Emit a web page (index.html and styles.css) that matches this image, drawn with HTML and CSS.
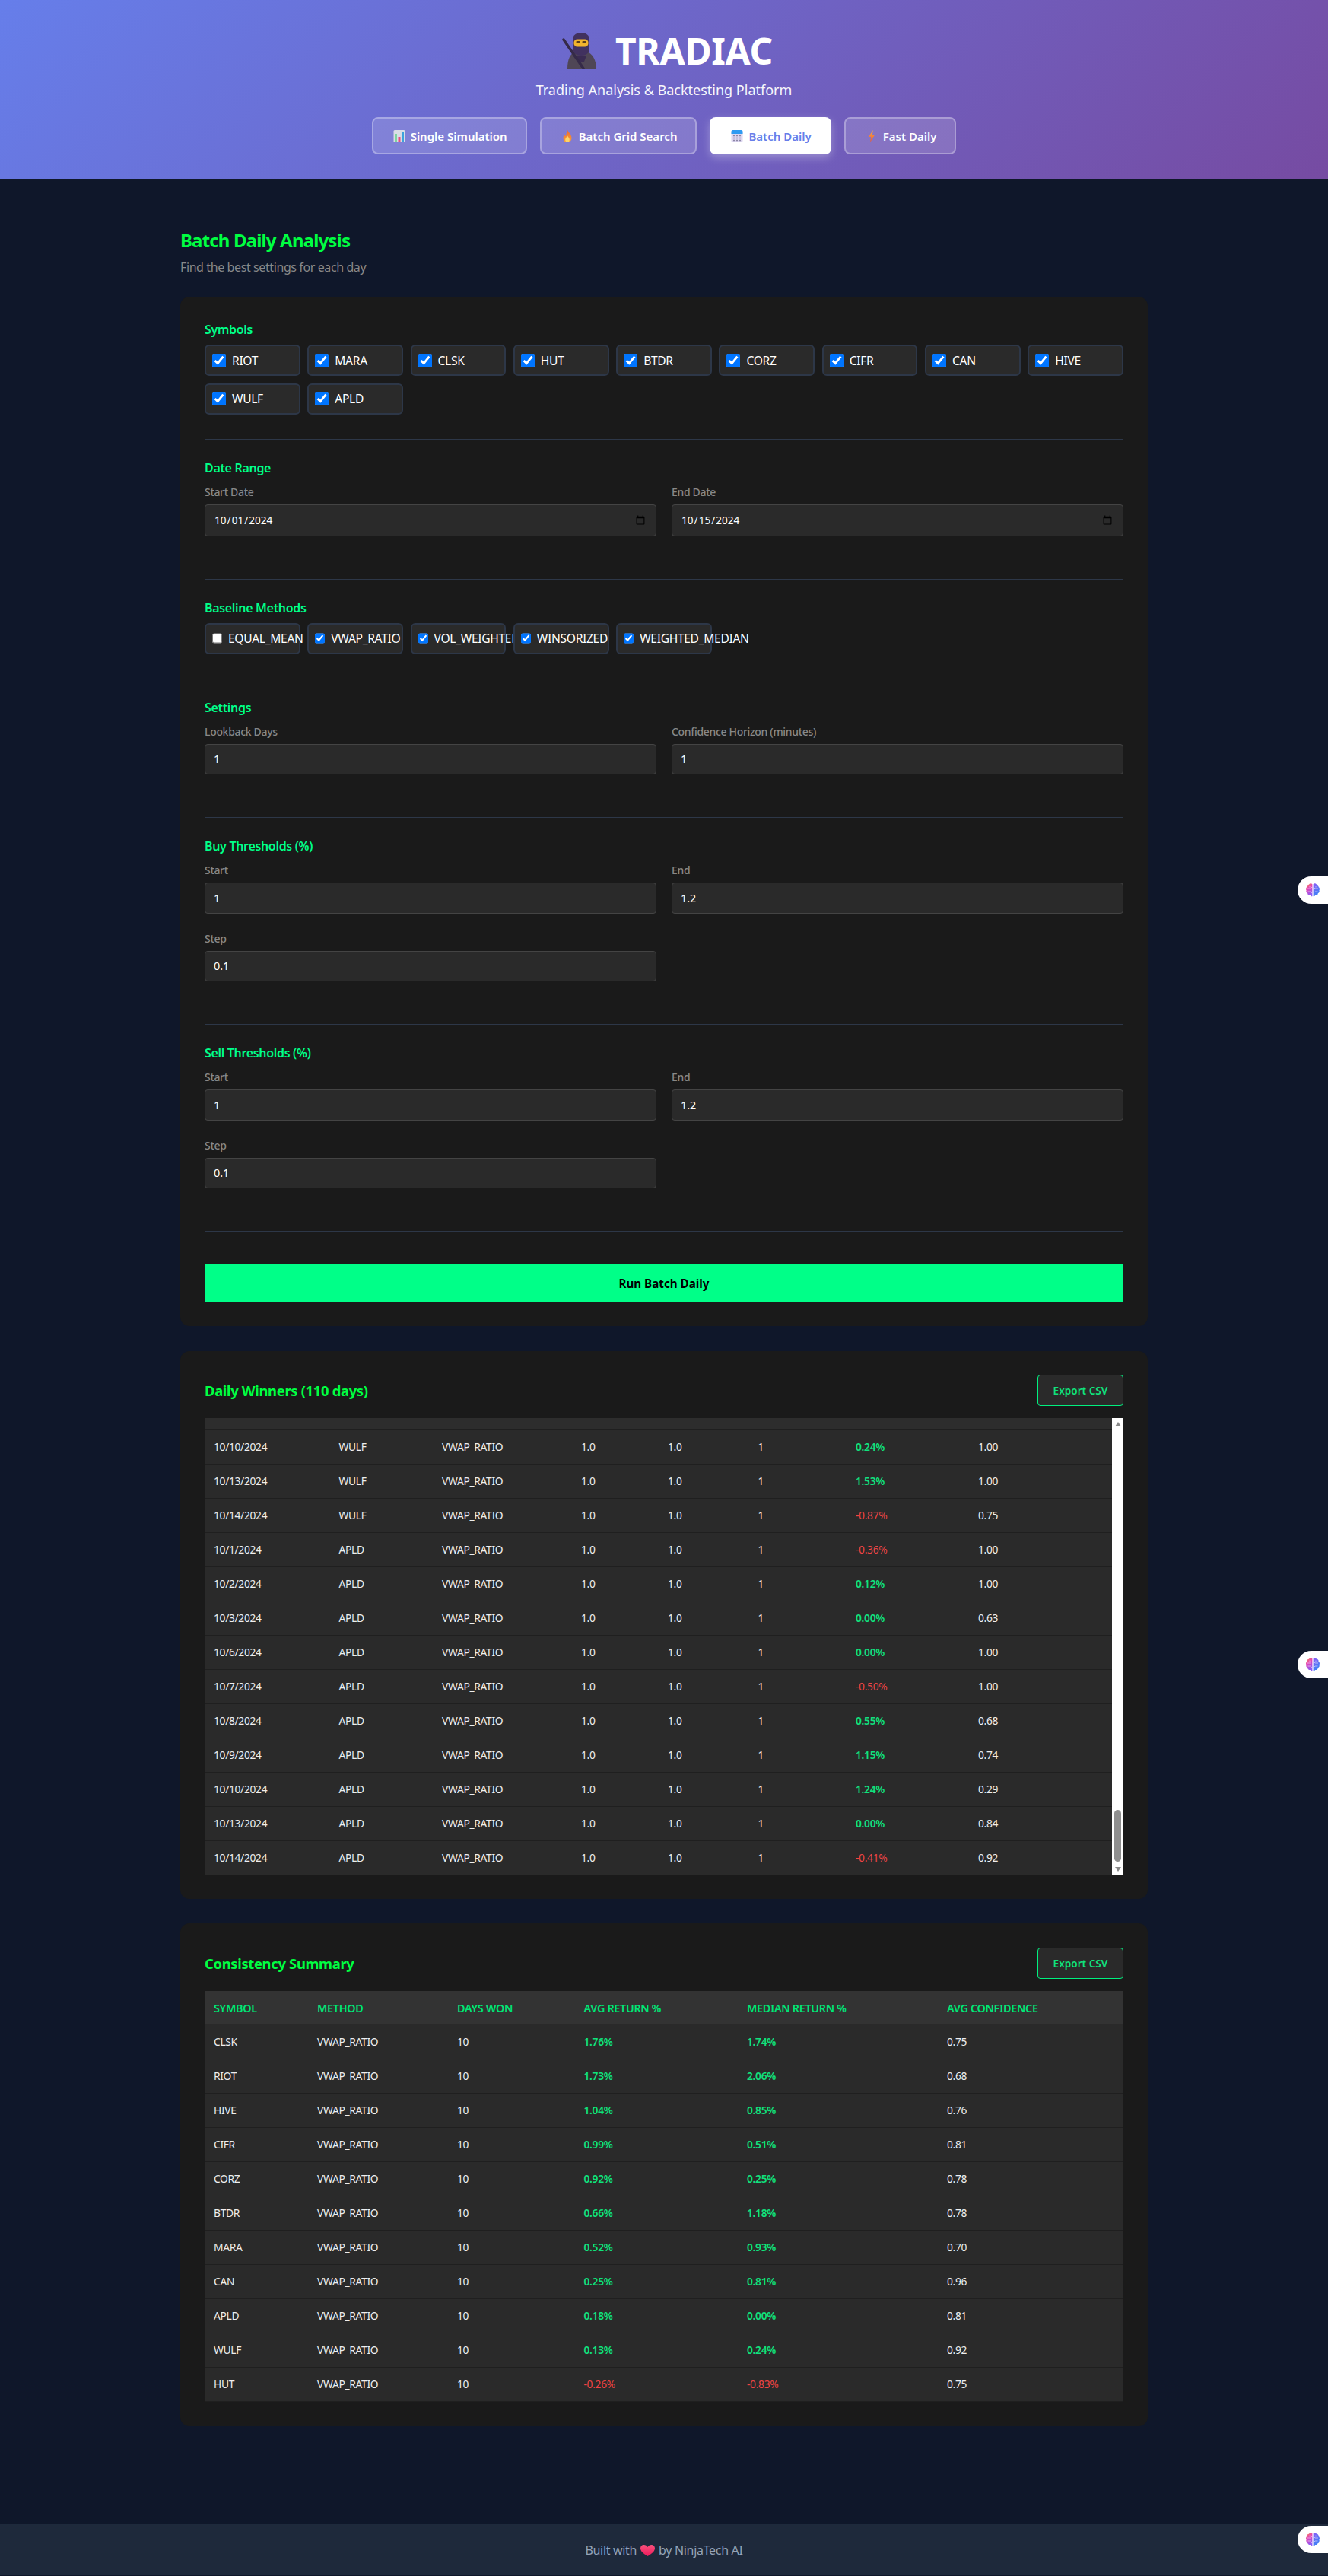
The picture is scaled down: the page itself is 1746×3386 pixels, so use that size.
FILE: index.html
```html
<!DOCTYPE html>
<html lang="en">

<head>
    <meta charset="UTF-8">
    <meta name="viewport" content="width=device-width, initial-scale=1.0">
    <title>TRADIAC</title>
    <link rel="stylesheet" href="styles.css">
</head>

<body>
    <svg class="defs" width="0" height="0">
        <defs>
            <linearGradient id="brainLeft" x1="0" y1="0" x2="0.4" y2="1">
                <stop offset="0" stop-color="#fb923c"/>
                <stop offset="0.45" stop-color="#e344b8"/>
                <stop offset="1" stop-color="#8b5cf6"/>
            </linearGradient>
            <linearGradient id="brainRight" x1="0" y1="0" x2="0.4" y2="1">
                <stop offset="0" stop-color="#8b5cf6"/>
                <stop offset="1" stop-color="#3b82f6"/>
            </linearGradient>
            <linearGradient id="flame" x1="0" y1="0" x2="0" y2="1">
                <stop offset="0" stop-color="#f0692c"/>
                <stop offset="1" stop-color="#f9a13a"/>
            </linearGradient>
            <linearGradient id="bolt" x1="0" y1="0" x2="0" y2="1">
                <stop offset="0" stop-color="#fbb03b"/>
                <stop offset="1" stop-color="#e8543a"/>
            </linearGradient>
            <linearGradient id="heart" x1="0" y1="0" x2="0" y2="1">
                <stop offset="0" stop-color="#f8517c"/>
                <stop offset="1" stop-color="#ee1a5c"/>
            </linearGradient>
            <symbol id="brain" viewBox="0 0 20 20">
                <path d="M9.4 2.2C8 .8 5.8 1.2 5 2.8 3.2 2.8 2 4.4 2.5 6 .9 6.9.5 9 1.6 10.3.8 11.900 1.600 13.800 3.200 14.200 3.300 16.200 5.200 17.500 7 16.900 7.800 18.400 9 18.500 9.400 18Z" fill="url(#brainLeft)"/>
                <path d="M10.600 2.200C12 .8 14.200 1.200 15 2.800 16.800 2.800 18 4.400 17.500 6 19.100 6.900 19.500 9 18.400 10.300 19.200 11.900 18.400 13.800 16.800 14.200 16.700 16.200 14.800 17.500 13 16.900 12.200 18.400 11 18.500 10.600 18Z" fill="url(#brainRight)"/>
                <path d="M3 8h4l2 -2M3.500 12h3.500l2 2M6 4.500v2M17 8h-4l-2 -2M16.500 12h-3.500l-2 2M14 4.500v2" fill="none" stroke="#fff" stroke-opacity=".65" stroke-width=".8"/>
            </symbol>
        </defs>
    </svg>

    <header class="top">
        <h1 class="brand">
            <svg class="ninja" viewBox="0 0 46 48" aria-hidden="true">
                <path d="M8 48C8 36 11 27 19 25h14c8 2 13 11 13 23Z" fill="#4f4656"/>
                <path d="M15 9C15 3 20 0 26 0s11 3 11 9v12c0 6-5 9-11 9s-11-3-11-9Z" fill="#41315f"/>
                <path d="M19 30h14l-3 8h-8Z" fill="#3a2b52"/>
                <rect x="16.500" y="8.500" width="19" height="10" rx="4.500" fill="#f2b32d"/>
                <rect x="19.500" y="11" width="5" height="2.500" rx="1" fill="#5a3d1a"/>
                <rect x="27.500" y="11" width="5" height="2.500" rx="1" fill="#5a3d1a"/>
                <path d="M3 9 29 47" stroke="#352a48" stroke-width="3.500" stroke-linecap="round"/>
            </svg>
            <span>TRADIAC</span>
        </h1>
        <p class="tagline">Trading Analysis &amp; Backtesting Platform</p>
        <nav class="tabs">
            <a class="tab" href="#">
                <svg class="tab-icon" viewBox="0 0 16 16" aria-hidden="true">
                    <rect x="0.500" width="15" height="16" rx="1.500" fill="#d9dde6"/>
                    <rect x="2" y="5" width="3" height="11" fill="#7fd3a0"/>
                    <rect x="6.500" y="9" width="3" height="7" fill="#ea4c7e"/>
                    <rect x="11" y="2.500" width="3" height="13.500" fill="#3da3dc"/>
                </svg>
                Single Simulation
            </a>
            <a class="tab" href="#">
                <svg class="tab-icon" viewBox="0 0 16 16" aria-hidden="true">
                    <path d="M8 0C9 3 13.500 5.500 13.500 10.500 13.500 14 11 16 8 16S2.500 14 2.500 10.500C2.500 8.500 3.500 7 4.500 6 4.800 7.500 5.500 8 6 8 6.500 5.500 7 3 8 0Z" fill="url(#flame)"/>
                    <path d="M8 7.500C9 9.500 10.800 10.500 10.800 12.800 10.800 14.700 9.500 16 8 16S5.200 14.700 5.200 12.800C5.200 10.500 7.200 9.500 8 7.500Z" fill="#fcd56a"/>
                </svg>
                Batch Grid Search
            </a>
            <a class="tab tab-active" href="#">
                <svg class="tab-icon" viewBox="0 0 16 16" aria-hidden="true">
                    <rect x="0.500" width="15" height="16" rx="2" fill="#ddd6f0"/>
                    <path d="M.5 5V2a2 2 0 0 1 2-2h11a2 2 0 0 1 2 2v3Z" fill="#2f9bf2"/>
                    <path d="M3 7.500h2M7 7.500h2M11 7.500h2M3 10.500h2M7 10.500h2M11 10.500h2M3 13.500h2M7 13.500h2M11 13.500h2" stroke="#8c86a6" stroke-width="1.400"/>
                </svg>
                Batch Daily
            </a>
            <a class="tab" href="#">
                <svg class="tab-icon" viewBox="0 0 16 16" aria-hidden="true">
                    <path d="M9.800 0 4 9h3.200L6 16l6-9.500H8.800Z" fill="url(#bolt)"/>
                </svg>
                Fast Daily
            </a>
        </nav>
    </header>

    <main class="page">
        <h2 class="page-title">Batch Daily Analysis</h2>
        <p class="page-sub">Find the best settings for each day</p>

        <form class="card form-card">
            <section class="group">
                <h3 class="group-title">Symbols</h3>
                <div class="chips">
                    <label class="chip"><input type="checkbox" checked><span>RIOT</span></label>
                    <label class="chip"><input type="checkbox" checked><span>MARA</span></label>
                    <label class="chip"><input type="checkbox" checked><span>CLSK</span></label>
                    <label class="chip"><input type="checkbox" checked><span>HUT</span></label>
                    <label class="chip"><input type="checkbox" checked><span>BTDR</span></label>
                    <label class="chip"><input type="checkbox" checked><span>CORZ</span></label>
                    <label class="chip"><input type="checkbox" checked><span>CIFR</span></label>
                    <label class="chip"><input type="checkbox" checked><span>CAN</span></label>
                    <label class="chip"><input type="checkbox" checked><span>HIVE</span></label>
                    <label class="chip"><input type="checkbox" checked><span>WULF</span></label>
                    <label class="chip"><input type="checkbox" checked><span>APLD</span></label>
                </div>
            </section>

            <section class="group">
                <h3 class="group-title">Date Range</h3>
                <div class="fields">
                    <div class="field">
                        <label class="field-label">Start Date</label>
                        <input class="input input-date" type="date" value="2024-10-01">
                    </div>
                    <div class="field">
                        <label class="field-label">End Date</label>
                        <input class="input input-date" type="date" value="2024-10-15">
                    </div>
                </div>
            </section>

            <section class="group">
                <h3 class="group-title">Baseline Methods</h3>
                <div class="chips">
                    <label class="chip"><input type="checkbox"><span>EQUAL_MEAN</span></label>
                    <label class="chip"><input type="checkbox" checked><span>VWAP_RATIO</span></label>
                    <label class="chip"><input type="checkbox" checked><span>VOL_WEIGHTED</span></label>
                    <label class="chip"><input type="checkbox" checked><span>WINSORIZED</span></label>
                    <label class="chip"><input type="checkbox" checked><span>WEIGHTED_MEDIAN</span></label>
                </div>
            </section>

            <section class="group">
                <h3 class="group-title">Settings</h3>
                <div class="fields">
                    <div class="field">
                        <label class="field-label">Lookback Days</label>
                        <input class="input" type="number" value="1">
                    </div>
                    <div class="field">
                        <label class="field-label">Confidence Horizon (minutes)</label>
                        <input class="input" type="number" value="1">
                    </div>
                </div>
            </section>

            <section class="group">
                <h3 class="group-title">Buy Thresholds (%)</h3>
                <div class="fields">
                    <div class="field">
                        <label class="field-label">Start</label>
                        <input class="input" type="number" value="1">
                    </div>
                    <div class="field">
                        <label class="field-label">End</label>
                        <input class="input" type="number" value="1.2">
                    </div>
                    <div class="field">
                        <label class="field-label">Step</label>
                        <input class="input" type="number" value="0.1">
                    </div>
                </div>
            </section>

            <section class="group">
                <h3 class="group-title">Sell Thresholds (%)</h3>
                <div class="fields">
                    <div class="field">
                        <label class="field-label">Start</label>
                        <input class="input" type="number" value="1">
                    </div>
                    <div class="field">
                        <label class="field-label">End</label>
                        <input class="input" type="number" value="1.2">
                    </div>
                    <div class="field">
                        <label class="field-label">Step</label>
                        <input class="input" type="number" value="0.1">
                    </div>
                </div>
            </section>

            <button class="run-btn" type="button">Run Batch Daily</button>
        </form>

        <section class="card results-card">
            <div class="card-head">
                <h2 class="card-title">Daily Winners (110 days)</h2>
                <button class="export-btn" type="button">Export CSV</button>
            </div>
            <div class="scroll-box">
                <div class="scroll-body">
                    <div class="scrolled-off"></div>
                    <table class="data-table daily-table">
                        <colgroup><col><col><col><col><col><col><col><col></colgroup>
                        <tbody>
                            <tr><td>10/10/2024</td><td>WULF</td><td>VWAP_RATIO</td><td>1.0</td><td>1.0</td><td>1</td><td class="pos">0.24%</td><td>1.00</td></tr>
                            <tr><td>10/13/2024</td><td>WULF</td><td>VWAP_RATIO</td><td>1.0</td><td>1.0</td><td>1</td><td class="pos">1.53%</td><td>1.00</td></tr>
                            <tr><td>10/14/2024</td><td>WULF</td><td>VWAP_RATIO</td><td>1.0</td><td>1.0</td><td>1</td><td class="neg">-0.87%</td><td>0.75</td></tr>
                            <tr><td>10/1/2024</td><td>APLD</td><td>VWAP_RATIO</td><td>1.0</td><td>1.0</td><td>1</td><td class="neg">-0.36%</td><td>1.00</td></tr>
                            <tr><td>10/2/2024</td><td>APLD</td><td>VWAP_RATIO</td><td>1.0</td><td>1.0</td><td>1</td><td class="pos">0.12%</td><td>1.00</td></tr>
                            <tr><td>10/3/2024</td><td>APLD</td><td>VWAP_RATIO</td><td>1.0</td><td>1.0</td><td>1</td><td class="pos">0.00%</td><td>0.63</td></tr>
                            <tr><td>10/6/2024</td><td>APLD</td><td>VWAP_RATIO</td><td>1.0</td><td>1.0</td><td>1</td><td class="pos">0.00%</td><td>1.00</td></tr>
                            <tr><td>10/7/2024</td><td>APLD</td><td>VWAP_RATIO</td><td>1.0</td><td>1.0</td><td>1</td><td class="neg">-0.50%</td><td>1.00</td></tr>
                            <tr><td>10/8/2024</td><td>APLD</td><td>VWAP_RATIO</td><td>1.0</td><td>1.0</td><td>1</td><td class="pos">0.55%</td><td>0.68</td></tr>
                            <tr><td>10/9/2024</td><td>APLD</td><td>VWAP_RATIO</td><td>1.0</td><td>1.0</td><td>1</td><td class="pos">1.15%</td><td>0.74</td></tr>
                            <tr><td>10/10/2024</td><td>APLD</td><td>VWAP_RATIO</td><td>1.0</td><td>1.0</td><td>1</td><td class="pos">1.24%</td><td>0.29</td></tr>
                            <tr><td>10/13/2024</td><td>APLD</td><td>VWAP_RATIO</td><td>1.0</td><td>1.0</td><td>1</td><td class="pos">0.00%</td><td>0.84</td></tr>
                            <tr><td>10/14/2024</td><td>APLD</td><td>VWAP_RATIO</td><td>1.0</td><td>1.0</td><td>1</td><td class="neg">-0.41%</td><td>0.92</td></tr>
                        </tbody>
                    </table>
                </div>
                <div class="scrollbar">
                    <span class="arrow-up"></span>
                    <span class="thumb"></span>
                    <span class="arrow-down"></span>
                </div>
            </div>
        </section>

        <section class="card">
            <div class="card-head">
                <h2 class="card-title">Consistency Summary</h2>
                <button class="export-btn" type="button">Export CSV</button>
            </div>
            <table class="data-table summary-table">
                <colgroup><col><col><col><col><col><col></colgroup>
                <thead>
                    <tr><th>Symbol</th><th>Method</th><th>Days Won</th><th>Avg Return %</th><th>Median Return %</th><th>Avg Confidence</th></tr>
                </thead>
                <tbody>
                    <tr><td>CLSK</td><td>VWAP_RATIO</td><td>10</td><td class="pos">1.76%</td><td class="pos">1.74%</td><td>0.75</td></tr>
                    <tr><td>RIOT</td><td>VWAP_RATIO</td><td>10</td><td class="pos">1.73%</td><td class="pos">2.06%</td><td>0.68</td></tr>
                    <tr><td>HIVE</td><td>VWAP_RATIO</td><td>10</td><td class="pos">1.04%</td><td class="pos">0.85%</td><td>0.76</td></tr>
                    <tr><td>CIFR</td><td>VWAP_RATIO</td><td>10</td><td class="pos">0.99%</td><td class="pos">0.51%</td><td>0.81</td></tr>
                    <tr><td>CORZ</td><td>VWAP_RATIO</td><td>10</td><td class="pos">0.92%</td><td class="pos">0.25%</td><td>0.78</td></tr>
                    <tr><td>BTDR</td><td>VWAP_RATIO</td><td>10</td><td class="pos">0.66%</td><td class="pos">1.18%</td><td>0.78</td></tr>
                    <tr><td>MARA</td><td>VWAP_RATIO</td><td>10</td><td class="pos">0.52%</td><td class="pos">0.93%</td><td>0.70</td></tr>
                    <tr><td>CAN</td><td>VWAP_RATIO</td><td>10</td><td class="pos">0.25%</td><td class="pos">0.81%</td><td>0.96</td></tr>
                    <tr><td>APLD</td><td>VWAP_RATIO</td><td>10</td><td class="pos">0.18%</td><td class="pos">0.00%</td><td>0.81</td></tr>
                    <tr><td>WULF</td><td>VWAP_RATIO</td><td>10</td><td class="pos">0.13%</td><td class="pos">0.24%</td><td>0.92</td></tr>
                    <tr><td>HUT</td><td>VWAP_RATIO</td><td>10</td><td class="neg">-0.26%</td><td class="neg">-0.83%</td><td>0.75</td></tr>
                </tbody>
            </table>
        </section>
    </main>

    <footer class="foot">
        Built with
        <svg class="foot-heart" viewBox="0 0 19 15" aria-hidden="true">
            <path d="M9.500 15C4 11.500 0 8.500 0 4.500 0 1.800 2 0 4.500 0 6.500 0 8.500 1 9.500 3 10.500 1 12.500 0 14.500 0 17 0 19 1.800 19 4.500 19 8.500 15 11.500 9.500 15Z" fill="url(#heart)"/>
        </svg>
        by NinjaTech AI
    </footer>

    <!-- floating assistant tabs, sit over the page -->
    <div class="side-tab side-tab-1"><svg class="side-brain"><use href="#brain"/></svg></div>
    <div class="side-tab side-tab-2"><svg class="side-brain"><use href="#brain"/></svg></div>
    <div class="side-tab side-tab-3"><svg class="side-brain"><use href="#brain"/></svg></div>
</body>

</html>
```

FILE: styles.css
```css
/* General Styles */
* {
    box-sizing: border-box;
}

body {
    position: relative;
    margin: 0;
    background-color: #0f172a;
    color: #e0e0e0;
    font-family: "Noto Sans", "Open Sans", sans-serif;
    letter-spacing: -0.02em;
}

.defs {
    position: absolute;
}

/* Header */
.top {
    height: 235px;
    padding-top: 43px;
    background: linear-gradient(135deg, #667eea 0%, #764ba2 100%);
    color: #fff;
    text-align: center;
}

.brand {
    display: flex;
    align-items: center;
    justify-content: center;
    gap: 25px;
    height: 48px;
    margin: 0;
    padding-left: 8px;
    font-size: 48px;
    font-weight: 700;
    line-height: 48px;
}

.ninja {
    width: 46px;
    height: 48px;
}

.tagline {
    margin: 16px 0 0;
    font-size: 18px;
    letter-spacing: 0;
    line-height: 23px;
    opacity: 0.95;
}

.tabs {
    display: flex;
    justify-content: center;
    gap: 17px;
    margin-top: 24px;
}

.tab {
    display: flex;
    align-items: center;
    gap: 7px;
    height: 49px;
    padding: 0 24px 0 26px;
    border: 2px solid rgba(255, 255, 255, 0.3);
    border-radius: 8px;
    background-color: rgba(255, 255, 255, 0.15);
    color: #fff;
    font-size: 15px;
    font-weight: 600;
    letter-spacing: 0;
    text-decoration: none;
}

.tab-active {
    border-color: #fff;
    background-color: #fff;
    color: #667eea;
    box-shadow: 0 4px 12px rgba(255, 255, 255, 0.3);
}

.tab-icon {
    width: 16px;
    height: 16px;
}

/* Page */
.page {
    width: 1272px;
    margin: 0 auto;
    padding: 62px 0 128px;
}

.page-title {
    margin: 0 0 5.5px;
    color: #00ff41;
    font-size: 24px;
    font-weight: 700;
    letter-spacing: -0.035em;
    line-height: 38px;
}

.page-sub {
    margin: 0 0 28.5px;
    color: #888;
    font-size: 16px;
    letter-spacing: -0.025em;
    line-height: 21px;
}

.card {
    margin-bottom: 32px;
    padding: 32px;
    border-radius: 12px;
    background-color: #1a1a1a;
}

.card:last-child {
    margin-bottom: 0;
}

/* Form Styling */
.form-card {
    margin-bottom: 33px;
    padding-top: 33px;
    padding-bottom: 31px;
}

.group {
    margin-bottom: 27px;
    padding-bottom: 32px;
    border-bottom: 1px solid #2d3748;
}

.group-title {
    margin: 0 0 9px;
    color: #00ff88;
    font-size: 16px;
    font-weight: 600;
    line-height: 21px;
}

.chips {
    display: grid;
    grid-template-columns: repeat(9, minmax(0, 1fr));
    gap: 9.6px;
}

.chip {
    display: flex;
    align-items: center;
    gap: 8px;
    height: 41px;
    min-width: 0;
    padding: 0 8px;
    border: 2px solid #2d3748;
    border-radius: 6px;
    background-color: #2a2a2a;
    color: #fff;
    font-size: 15.6px;
    white-space: nowrap;
}

.chip input {
    width: 18px;
    height: 18px;
    margin: 0;
}

.fields {
    display: grid;
    grid-template-columns: 1fr 1fr;
    column-gap: 20px;
    margin-bottom: 3px;
}

.field {
    margin-bottom: 21px;
}

.field-label {
    display: block;
    margin-bottom: 5px;
    color: #888;
    font-size: 14px;
    font-weight: 500;
    line-height: 23px;
}

.input {
    display: block;
    width: 100%;
    height: 40.5px;
    padding: 0 11px;
    border: 1px solid #444;
    border-radius: 4px;
    background-color: #2a2a2a;
    color: #fff;
    font-family: inherit;
    font-size: 14.4px;
}

.input-date {
    height: 42px;
    font-size: 13.6px;
}

.run-btn {
    display: block;
    width: 100%;
    height: 51px;
    margin-top: 42px;
    border: none;
    border-radius: 4px;
    background-color: #00ff88;
    color: #000;
    font-family: inherit;
    font-size: 15.2px;
    font-weight: 700;
}

/* Result Styling */
.card-head {
    display: flex;
    align-items: center;
    justify-content: space-between;
    margin-bottom: 16px;
}

.results-card {
    padding-top: 31px;
}

.card-title {
    margin: 0;
    color: #00ff41;
    font-size: 18.4px;
    font-weight: 700;
}

.export-btn {
    width: 113px;
    height: 41px;
    border: 1px solid #00f07f;
    border-radius: 4px;
    background-color: #2a2a2a;
    color: #10e27c;
    font-family: inherit;
    font-size: 13.6px;
    font-weight: 600;
}

.scroll-box {
    display: flex;
    height: 600px;
}

.scroll-body {
    flex: 1;
    min-width: 0;
}

.scrolled-off {
    height: 15px;
    border-bottom: 1px solid #1f1f1f;
    background-color: #2d2d2d;
}

.scrollbar {
    display: flex;
    flex-direction: column;
    align-items: center;
    justify-content: flex-end;
    width: 15px;
    background-color: #fff;
}

.arrow-up {
    width: 0;
    height: 0;
    margin-bottom: auto;
    margin-top: 5px;
    border-right: 4px solid transparent;
    border-bottom: 6px solid #8a8a8a;
    border-left: 4px solid transparent;
}

.thumb {
    width: 9px;
    height: 68px;
    margin-bottom: 7px;
    border-radius: 5px;
    background-color: #8f8f8f;
}

.arrow-down {
    width: 0;
    height: 0;
    margin-bottom: 4px;
    border-top: 6px solid #8a8a8a;
    border-right: 4px solid transparent;
    border-left: 4px solid transparent;
}

/* Table Styling */
.data-table {
    width: 100%;
    border-collapse: collapse;
    table-layout: fixed;
    font-size: 13.8px;
}

.data-table td {
    height: 45px;
    padding: 0 12px;
    border-bottom: 1px solid #1f1f1f;
    background-color: #2a2a2a;
    color: #eee;
}

.data-table th {
    height: 44px;
    padding: 0 12px;
    background-color: #333;
    color: #00e676;
    font-size: 14.4px;
    font-weight: 600;
    text-align: left;
    text-transform: uppercase;
}

.data-table td.pos {
    color: #10e27c;
    font-weight: 600;
}

.data-table td.neg {
    color: #ef4444;
}

.daily-table col:nth-child(1) { width: 164.5px; }
.daily-table col:nth-child(2) { width: 135.5px; }
.daily-table col:nth-child(3) { width: 183px; }
.daily-table col:nth-child(4) { width: 114px; }
.daily-table col:nth-child(5) { width: 118.5px; }
.daily-table col:nth-child(6) { width: 128.5px; }
.daily-table col:nth-child(7) { width: 161px; }

.summary-table col:nth-child(1) { width: 136px; }
.summary-table col:nth-child(2) { width: 184px; }
.summary-table col:nth-child(3) { width: 166.5px; }
.summary-table col:nth-child(4) { width: 214.5px; }
.summary-table col:nth-child(5) { width: 263px; }

/* Footer */
.foot {
    display: flex;
    align-items: center;
    justify-content: center;
    gap: 5px;
    height: 68px;
    padding-top: 3px;
    background-color: #1e293b;
    color: #94a3b8;
    font-size: 16px;
}

.foot-heart {
    width: 19px;
    height: 15px;
}

/* Floating tabs */
.side-tab {
    position: absolute;
    right: 0;
    display: flex;
    align-items: center;
    width: 40px;
    height: 36px;
    padding-left: 10px;
    border-radius: 18px 0 0 18px;
    background-color: #fff;
}

.side-tab-1 { top: 1152px; }
.side-tab-2 { top: 2170px; }
.side-tab-3 { top: 3320px; }

.side-brain {
    width: 20px;
    height: 20px;
}
```
